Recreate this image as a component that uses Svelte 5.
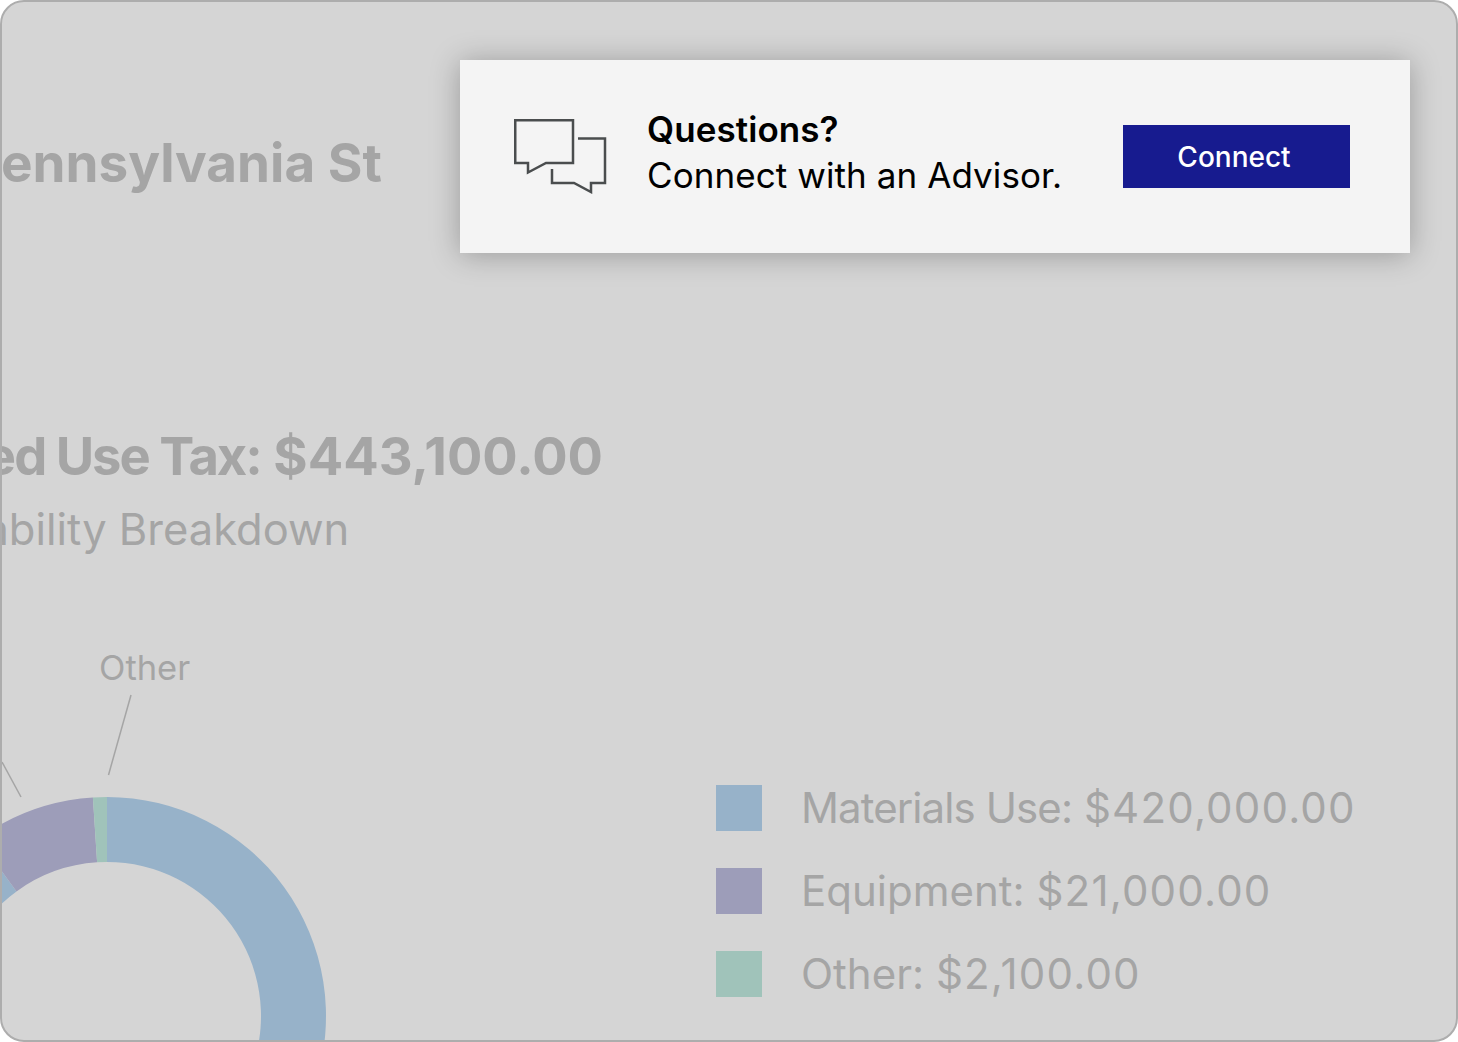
<script lang="ts">
  const legend = [
    { label: 'Materials Use:', amount: '$420,000.00', color: '#97b2c9' },
    { label: 'Equipment:', amount: '$21,000.00', color: '#9d9db9' },
    { label: 'Other:', amount: '$2,100.00', color: '#a0c3ba' }
  ];
</script>

<div class="frame">
  <div class="report">
    <h1 class="address">Pennsylvania St</h1>
    <h2 class="total"><span class="total-label">Estimated Use Tax:</span> $443,100.00</h2>
    <p class="subtitle">Tax Liability Breakdown</p>
    <div class="chart-row">
      <div class="chart">
        <span class="other-label">Other</span>
        <svg class="donut" width="460" height="400" viewBox="-230 -230 460 400" aria-hidden="true">
          <path d="M0 -219 A219 219 0 1 1 -128.700 -177.200 L-90.500 -124.600 A154 154 0 1 0 0 -154 Z" fill="#97b2c9" />
          <path d="M-14.100 -218.500 A219 219 0 0 0 -128.700 -177.200 L-90.500 -124.600 A154 154 0 0 1 -9.900 -153.700 Z" fill="#9d9db9" />
          <path d="M0 -219 A219 219 0 0 0 -14.100 -218.500 L-9.900 -153.700 A154 154 0 0 1 0 -154 Z" fill="#a0c3ba" />
          <path d="M24 -321 L1.500 -241" stroke="#a5a5a5" stroke-width="1.500" fill="none" />
          <path d="M-105 -254 L-86 -219" stroke="#a5a5a5" stroke-width="1.500" fill="none" />
        </svg>
      </div>
      <ul class="legend">
        {#each legend as item}
          <li>
            <span class="swatch" style:background={item.color}></span>
            <span><span class="legend-label">{item.label}</span> <span class="legend-amount">{item.amount}</span></span>
          </li>
        {/each}
      </ul>
    </div>
  </div>

  <aside class="advisor">
    <svg class="chat-icon" width="94" height="75" viewBox="0 0 94 75" fill="none" stroke="#4a4d4e" stroke-width="2.500" aria-hidden="true">
      <path d="M1.250 1.250H59V44H32L14 53.500V44H1.250Z" />
      <path d="M64 19.500H91V64H77V73L60 64H38V50" />
    </svg>
    <div class="advisor-text">
      <strong>Questions?</strong>
      <span>Connect with an Advisor.</span>
    </div>
    <button class="connect">Connect</button>
  </aside>
</div>

<style>
  :global(body) {
    background: #fff;
  }

  .frame {
    position: relative;
    box-sizing: border-box;
    width: 1458px;
    height: 1042px;
    overflow: hidden;
    background: #d5d5d5;
    border: 2px solid #adadad;
    border-radius: 24px;
    font-family: Inter, sans-serif;
    color: #a5a5a5;
  }

  .report {
    padding-top: 130px;
  }

  .address {
    margin: 0 0 0 -35px;
    font-size: 53px;
    line-height: 62px;
    font-weight: 700;
    white-space: nowrap;
  }

  .total {
    margin: 230px 0 0 -195px;
    font-size: 52.500px;
    line-height: 64px;
    font-weight: 700;
    white-space: nowrap;
  }

  .total-label {
    letter-spacing: -2px;
  }

  .subtitle {
    margin: 13px 0 0 -138px;
    font-size: 43.500px;
    line-height: 56px;
    white-space: nowrap;
  }

  .chart-row {
    display: flex;
    margin-top: 91px;
  }

  .chart {
    position: relative;
    flex: none;
    width: 714px;
  }

  .other-label {
    position: absolute;
    left: 97px;
    top: 0;
    font-size: 34.500px;
    line-height: 40px;
  }

  .donut {
    position: absolute;
    left: -125px;
    top: 138px;
    overflow: visible;
  }

  .legend {
    list-style: none;
    margin: 137px 0 0;
    padding: 0;
    display: flex;
    flex-direction: column;
    gap: 37px;
    font-size: 42px;
    line-height: 46px;
    white-space: nowrap;
  }

  .legend li {
    display: flex;
    align-items: center;
    gap: 39px;
  }

  .legend li:first-child .legend-label {
    letter-spacing: -0.900px;
  }

  .legend-amount {
    letter-spacing: 1.200px;
  }

  .swatch {
    width: 46px;
    height: 46px;
    flex: none;
  }

  .advisor {
    position: absolute;
    left: 458px;
    top: 58px;
    box-sizing: border-box;
    width: 950px;
    height: 193px;
    display: flex;
    align-items: center;
    padding: 0 60px 0 54px;
    background: #f4f4f4;
    box-shadow: 0 2px 28px rgba(0, 0, 0, 0.28);
    color: #000;
  }

  .chat-icon {
    flex: none;
    margin-right: 40px;
  }

  .advisor-text {
    flex: 1;
    display: flex;
    flex-direction: column;
    margin-top: -10px;
    margin-left: -1px;
    font-size: 35px;
    line-height: 46px;
    letter-spacing: 0.080px;
  }

  .advisor-text strong {
    font-weight: 600;
  }

  .connect {
    flex: none;
    width: 227px;
    height: 63px;
    padding: 0 5px 0 0;
    border: 0;
    border-radius: 0;
    background: #171b8f;
    color: #fff;
    font-family: inherit;
    font-size: 28px;
    font-weight: 500;
  }
</style>
